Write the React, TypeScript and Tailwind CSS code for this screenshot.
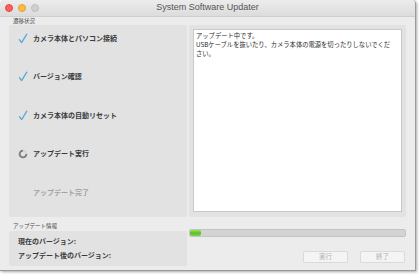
const jp = "font-['Noto_Sans_CJK_JP','Noto_Sans',sans-serif]";

function TrafficLights() {
  return (
    <div className="flex items-center gap-[5px] pl-[5px]">
      <span className="block size-[8px] rounded-full bg-[#fc605c] border border-[#de4a44]" />
      <span className="block size-[8px] rounded-full bg-[#fdbc40] border border-[#dea035]" />
      <span className="block size-[8px] rounded-full bg-[#d0d0d0] border border-[#bdbdbd]" />
    </div>
  );
}

function Check() {
  return (
    <svg width="10" height="11" viewBox="0 0 10 11">
      <path d="M1.4 6.6 L3.6 9.6 L8.8 1.2" fill="none" stroke="#5aa8d6" strokeWidth="1.3" strokeLinecap="round" strokeLinejoin="round" />
    </svg>
  );
}

function Spinner() {
  return (
    <svg width="10" height="10" viewBox="0 0 10 10">
      <circle cx="5" cy="5" r="3.4" fill="none" stroke="#d4d4d4" strokeWidth="1.8" />
      <path d="M5 1.6 A3.4 3.4 0 1 0 8.4 5" fill="none" stroke="#7d7d7d" strokeWidth="1.8" />
    </svg>
  );
}

function Step({ icon, label, muted }: { icon?: "check" | "spin"; label: string; muted?: boolean }) {
  return (
    <div className="flex items-center h-[14px]">
      <div className="w-[24px] flex justify-center pl-[3px]">
        {icon === "check" && <Check />}
        {icon === "spin" && <Spinner />}
      </div>
      <span className={`text-[7px] font-bold ${muted ? "text-[#a2a2a2]" : "text-[#3a3a3a]"}`}>{label}</span>
    </div>
  );
}

function Button({ label }: { label: string }) {
  return (
    <div className="w-[45px] h-[12px] rounded-[2px] border border-[#dadada] bg-[#f4f4f4] flex items-center justify-center text-[6.5px] text-[#b0b0b0]">
      {label}
    </div>
  );
}

export default function App() {
  return (
    <div className={`w-[420px] h-[275px] bg-white ${jp}`}>
      <div className="w-[416px] h-[271px] bg-[#ececec] rounded-t-[4px] border-b border-r border-[#9a9a9a] shadow-[1px_1px_3px_rgba(0,0,0,0.35)] flex flex-col overflow-hidden">
        <div className="relative h-[17px] flex items-center bg-gradient-to-b from-[#ececec] to-[#dcdcdc] border-b border-[#cfcfcf]">
          <TrafficLights />
          <div className="absolute inset-0 flex items-center justify-center text-[9px] text-[#555] font-['Liberation_Sans',sans-serif]">
            System Software Updater
          </div>
        </div>

        <div className="flex flex-col px-[9px]">
          <div className="h-[8px] pl-[4px] text-[5.5px] leading-[8px] text-[#4a4a4a]">遷移状況</div>
          <div className="flex gap-[2px] h-[192px]">
            <div className="w-[178px] bg-[#e2e2e2] rounded-[2px] flex flex-col gap-[24.5px] pt-[6px]">
              <Step icon="check" label="カメラ本体とパソコン接続" />
              <Step icon="check" label="バージョン確認" />
              <Step icon="check" label="カメラ本体の自動リセット" />
              <Step icon="spin" label="アップデート実行" />
              <Step label="アップデート完了" muted />
            </div>
            <div className="flex-1 bg-[#e2e2e2] rounded-[2px] pt-[4px] pb-[5px] px-[4px] flex">
              <div className="flex-1 bg-white border border-[#c9c9c9] px-[2px] pt-[1px] text-[6.3px] leading-[9px] text-[#2a2a2a]">
                <p>アップデート中です。</p>
                <p className="whitespace-nowrap">
                  USBケーブルを抜いたり、カメラ本体の電源を切ったりしないでくだ
                  <br />
                  さい。
                </p>
              </div>
            </div>
          </div>

          <div className="h-[14px] pl-[4px] pt-[5px] text-[5.5px] leading-[8px] text-[#4a4a4a]">アップデート情報</div>
          <div className="flex gap-[2px]">
            <div className="w-[178px] h-[35px] bg-[#e2e2e2] rounded-[2px] flex flex-col justify-center gap-[5px] pl-[9px] text-[7px] font-bold text-[#3a3a3a]">
              <span className="leading-[9px]">現在のバージョン:</span>
              <span className="leading-[9px]">アップデート後のバージョン:</span>
            </div>
            <div className="flex-1 flex flex-col">
              <div className="h-[8px] mt-[-2px] bg-[#d3d3d3] rounded-[2px] border border-[#c4c4c4] flex">
                <div className="w-[11px] h-full rounded-[2px] bg-gradient-to-b from-[#9be05a] via-[#5cbf26] to-[#7fd347]" />
              </div>
              <div className="flex justify-end gap-[12px] mt-[14px] pr-[1px]">
                <Button label="実行" />
                <Button label="終了" />
              </div>
            </div>
          </div>
        </div>
      </div>
    </div>
  );
}
